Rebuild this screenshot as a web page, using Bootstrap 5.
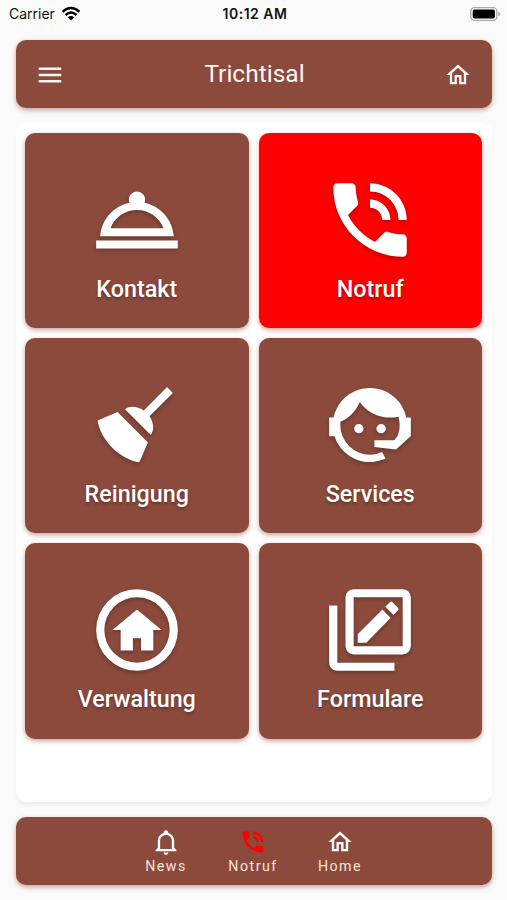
<!DOCTYPE html>
<html lang="de">
<head>
<meta charset="utf-8">
<meta name="viewport" content="width=device-width, initial-scale=1">
<title>Trichtisal</title>
<link href="https://cdn.jsdelivr.net/npm/bootstrap@5.3.0/dist/css/bootstrap.min.css" rel="stylesheet">
<style>
  body { font-family: Roboto, sans-serif; background: #fafafa; width: 507px; height: 900px; overflow: hidden; }
  svg { display: block; fill: currentColor; flex: none; }
  .statusbar { height: 40px; padding: 4px 6px 0 9px; font-family: Inter, sans-serif; font-size: 14px; line-height: 20px; color: #111; }
  .statusbar > div { height: 20px; }
  .clock { font-weight: 600; letter-spacing: .5px; }
  .bar { background: #8b4a3c; color: #fff6f1; border-radius: 10px; height: 68px; margin: 0 15px 0 16px; box-shadow: 0 2px 5px rgba(139,74,60,.5); }
  .topbar { padding: 1px 20px 0 19px; }
  .app-title { font-size: 24.5px; font-weight: 400; line-height: 1; }
  .panel { background: #fff; border-radius: 10px; margin: 15px 15px 15px 16px; height: 679px; padding: 10px 10px 0 9px; box-shadow: 0 4px 4px -1px rgba(0,0,0,.05); }
  .tiles { display: grid; grid-template-columns: 1fr 1fr; grid-auto-rows: 195.2px; gap: 10px; }
  .tile { background: #8b4a3c; color: #fff; border-radius: 10px; padding-top: 38px; box-shadow: 0 2px 5px rgba(139,74,60,.5); font-size: 23.3px; font-weight: 500; line-height: 28px; text-shadow: 0 2px 3px rgba(0,0,0,.3); }
  .tile svg { width: 98px; height: 98px; margin-bottom: 6px; filter: drop-shadow(0 2px 2px rgba(0,0,0,.25)); }
  .tile.alarm { background: #f00; box-shadow: 0 2px 5px rgba(255,0,0,.4); }
  .tabs { padding-right: 2px; }
  .tab { width: 87px; padding-top: 11px; font-size: 14.2px; line-height: 16px; letter-spacing: 1.5px; color: #fbe3d8; }
  .tab svg { margin: 0 1px 1.5px 0; color: #fff; }
  .tab svg.hot { color: #f00; }
</style>
<script src="https://cdn.jsdelivr.net/npm/bootstrap@5.3.0/dist/js/bootstrap.bundle.min.js"></script>
</head>
<body>
<svg width="0" height="0" class="position-absolute">
  <symbol id="home" viewBox="0 0 24 24"><path d="M12 5.69l5 4.5V18h-2v-6H9v6H7v-7.81l5-4.5M12 3L2 12h3v8h6v-6h2v6h6v-8h3L12 3"/></symbol>
  <symbol id="phone" viewBox="0 0 24 24"><path d="M20 15.5c-1.25 0-2.45-.2-3.57-.57-.35-.11-.74-.03-1.02.24l-2.2 2.2c-2.83-1.44-5.15-3.75-6.59-6.59l2.2-2.21c.28-.26.36-.65.25-1C8.7 6.45 8.5 5.25 8.5 4c0-.55-.45-1-1-1H4c-.55 0-1 .45-1 1 0 9.39 7.61 17 17 17 .55 0 1-.45 1-1v-3.5c0-.55-.45-1-1-1zM19 12h2c0-4.97-4.03-9-9-9v2c3.87 0 7 3.13 7 7zm-4 0h2c0-2.76-2.24-5-5-5v2c1.66 0 3 1.34 3 3z"/></symbol>
</svg>

<div class="statusbar d-flex justify-content-between">
  <div class="d-flex align-items-center col-4"><span>Carrier</span>
    <svg width="22" height="16" viewBox="0 0 22 16" fill="none" stroke="#000" stroke-width="2.4" style="fill:none;margin-left:5px"><path d="M2.6 5.8Q11 -1.6 19.4 5.8M5.6 9Q11 4.2 16.4 9"/><path d="M11 14.6L7.7 11.3Q11 8.6 14.3 11.3Z" fill="#000" stroke="none"/></svg>
  </div>
  <div class="clock">10:12 AM</div>
  <div class="d-flex align-items-center justify-content-end col-4">
    <svg width="31" height="14" viewBox="0 0 31 14"><rect x=".8" y=".7" width="26" height="12.6" rx="3.6" fill="#fafafa" stroke="#aaa" stroke-width="1.3"/><rect x="2.7" y="2.6" width="22.2" height="8.8" rx="1.8" fill="#000"/><path d="M28.3 4.8Q30.4 5.6 30.4 7T28.3 9.2Z" fill="#aaa"/></svg>
  </div>
</div>

<header class="bar topbar d-flex align-items-center justify-content-between">
  <svg width="30" height="30" viewBox="0 0 24 24"><path d="M3 6h18v2H3V6m0 5h18v2H3v-2m0 5h18v2H3v-2z"/></svg>
  <h1 class="app-title m-0">Trichtisal</h1>
  <svg width="28" height="28"><use href="#home"/></svg>
</header>

<main class="panel">
  <div class="tiles">
    <div class="tile d-flex flex-column align-items-center">
      <svg viewBox="0 0 24 24"><path d="M2 17h20v2H2v-2zm11.84-9.21c.1-.24.16-.51.16-.79 0-1.1-.9-2-2-2s-2 .9-2 2c0 .28.06.55.16.79C6.25 8.6 3.27 11.93 3 16h18c-.27-4.07-3.25-7.4-7.16-8.21zM12 9.58c2.95 0 5.47 1.83 6.5 4.41h-13c1.03-2.58 3.55-4.41 6.5-4.41z"/></svg>
      <span>Kontakt</span>
    </div>
    <div class="tile alarm d-flex flex-column align-items-center">
      <svg><use href="#phone"/></svg>
      <span>Notruf</span>
    </div>
    <div class="tile d-flex flex-column align-items-center">
      <svg viewBox="0 0 24 24"><path d="M19.36 2.72L20.78 4.14L15.06 9.85C16.13 11.39 16.28 13.24 15.38 14.44L9.06 8.12C10.26 7.22 12.11 7.37 13.65 8.44L19.36 2.72M5.93 17.57C3.92 15.56 2.69 13.16 2.35 10.92L7.23 8.83L14.67 16.27L12.58 21.15C10.34 20.81 7.94 19.58 5.93 17.57Z"/></svg>
      <span>Reinigung</span>
    </div>
    <div class="tile d-flex flex-column align-items-center">
      <svg viewBox="0 0 24 24"><path d="M18.72 14.76C19.07 13.91 19.26 13 19.26 12C19.26 11.28 19.15 10.59 18.96 9.95C18.31 10.1 17.63 10.18 16.92 10.18C13.86 10.18 11.15 8.67 9.5 6.34C8.61 8.5 6.91 10.26 4.77 11.22C4.73 11.47 4.73 11.74 4.73 12A7.27 7.27 0 0 0 12 19.27C13.05 19.27 14.06 19.04 14.97 18.63C15.54 19.72 15.8 20.26 15.78 20.26C14.14 20.81 12.87 21.08 12 21.08C9.58 21.08 7.27 20.13 5.57 18.42C4.53 17.38 3.76 16.11 3.33 14.73H2V10.18H3.09C3.93 6.04 7.6 2.92 12 2.92C14.4 2.92 16.71 3.87 18.42 5.58C19.69 6.84 20.54 8.45 20.89 10.18H22V14.73H21.94L18.38 18L13.08 17.4V15.73H17.91L18.72 14.76"/><circle cx="9.27" cy="12.91" r="1.14"/><circle cx="14.72" cy="12.91" r="1.14"/></svg>
      <span>Services</span>
    </div>
    <div class="tile d-flex flex-column align-items-center">
      <svg viewBox="0 0 24 24"><path fill-rule="evenodd" d="M12 2a10 10 0 1 0 0 20a10 10 0 1 0 0-20zM12 4a8 8 0 1 1 0 16a8 8 0 1 1 0-16z"/><path d="M12 7L6 12h2v5h3v-3h2v3h3v-5h2z"/></svg>
      <span>Verwaltung</span>
    </div>
    <div class="tile d-flex flex-column align-items-center">
      <svg viewBox="0 0 24 24"><path fill-rule="evenodd" d="M8 2H20A2 2 0 0 1 22 4V16A2 2 0 0 1 20 18H8A2 2 0 0 1 6 16V4A2 2 0 0 1 8 2zM8 4V16H20V4z"/><path d="M2 6H4V20H18V22H4A2 2 0 0 1 2 20zM9 13.05V15.1H11.1L17.05 9.05L15.05 7zM15.75 6.3L16.95 5.15Q17.2 4.95 17.45 5.15L18.9 6.6Q19.1 6.85 18.9 7.1L17.75 8.35z"/></svg>
      <span>Formulare</span>
    </div>
  </div>
</main>

<nav class="bar tabs d-flex justify-content-center">
  <div class="tab d-flex flex-column align-items-center"><svg width="28" height="28" viewBox="0 0 24 24"><path d="M10 21H14C14 22.1 13.1 23 12 23S10 22.1 10 21M21 19V20H3V19L5 17V11C5 7.9 7 5.2 10 4.3V4C10 2.9 10.9 2 12 2S14 2.9 14 4V4.3C17 5.2 19 7.9 19 11V17L21 19M17 11C17 8.2 14.8 6 12 6S7 8.2 7 11V18H17V11Z"/></svg>News</div>
  <div class="tab d-flex flex-column align-items-center"><svg class="hot" width="28" height="28"><use href="#phone"/></svg>Notruf</div>
  <div class="tab d-flex flex-column align-items-center"><svg width="28" height="28"><use href="#home"/></svg>Home</div>
</nav>
</body>
</html>
